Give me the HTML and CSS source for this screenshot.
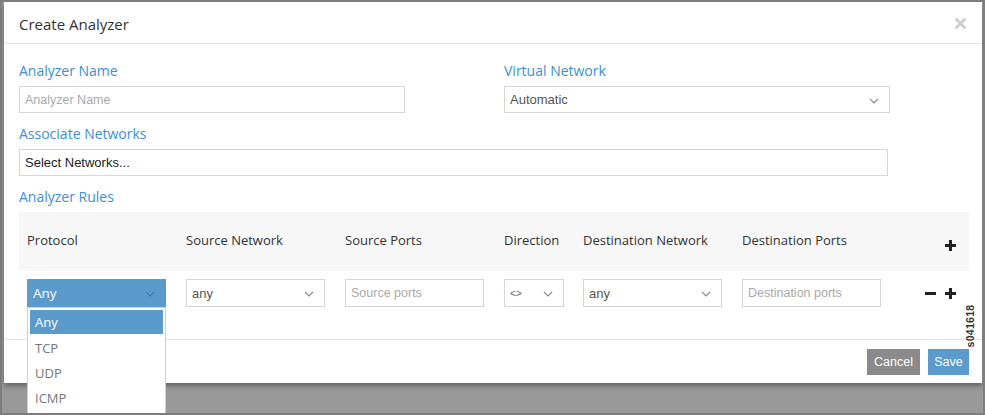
FILE: index.html
```html
<!DOCTYPE html>
<html>
<head>
<meta charset="utf-8">
<link rel="stylesheet" href="styles.css">
</head>
<body>
<div class="screen">
  <div class="modal">
    <div class="modal-header">
      <h1 class="title">Create Analyzer</h1>
      <svg class="close" width="11" height="11" viewBox="0 0 11 11"><path d="M1.5 1.5 L9.5 9.5 M9.5 1.5 L1.5 9.5" stroke="#cfcfcf" stroke-width="3" stroke-linecap="round"/></svg>
    </div>
    <div class="modal-body">
      <div class="two-col">
        <div class="group">
          <label class="lbl">Analyzer Name</label>
          <div class="field w386"><span class="ph">Analyzer Name</span></div>
        </div>
        <div class="group">
          <label class="lbl">Virtual Network</label>
          <div class="field w386 select"><span class="val">Automatic</span><svg class="chev" width="10" height="6" viewBox="0 0 10 6"><polyline points="1,1 5,5 9,1" fill="none" stroke="#888" stroke-width="1.1"/></svg></div>
        </div>
      </div>
      <div class="group">
        <label class="lbl">Associate Networks</label>
        <div class="field w869"><span class="val dark">Select Networks...</span></div>
      </div>
      <div class="group">
        <label class="lbl">Analyzer Rules</label>
        <div class="rules">
          <div class="rules-head">
            <div class="th">Protocol</div>
            <div class="th">Source Network</div>
            <div class="th">Source Ports</div>
            <div class="th">Direction</div>
            <div class="th">Destination Network</div>
            <div class="th">Destination Ports</div>
            <div class="th actions"><span class="plus"></span></div>
          </div>
          <div class="rules-row">
            <div class="td"><div class="field cell select active"><span class="val white">Any</span><svg class="chev" width="10" height="6" viewBox="0 0 10 6"><polyline points="1,1 5,5 9,1" fill="none" stroke="#3f78a8" stroke-width="1.1"/></svg></div></div>
            <div class="td"><div class="field cell select"><span class="val">any</span><svg class="chev" width="10" height="6" viewBox="0 0 10 6"><polyline points="1,1 5,5 9,1" fill="none" stroke="#888" stroke-width="1.1"/></svg></div></div>
            <div class="td"><div class="field cell"><span class="ph sm">Source ports</span></div></div>
            <div class="td"><div class="field dir select"><span class="val tiny">&lt;&gt;</span><svg class="chev" width="10" height="6" viewBox="0 0 10 6"><polyline points="1,1 5,5 9,1" fill="none" stroke="#888" stroke-width="1.1"/></svg></div></div>
            <div class="td"><div class="field cell select"><span class="val">any</span><svg class="chev" width="10" height="6" viewBox="0 0 10 6"><polyline points="1,1 5,5 9,1" fill="none" stroke="#888" stroke-width="1.1"/></svg></div></div>
            <div class="td"><div class="field cell"><span class="ph sm">Destination ports</span></div></div>
            <div class="td actions"><span class="minus"></span><span class="plus"></span></div>
          </div>
        </div>
      </div>
    </div>
    <div class="modal-footer">
      <button class="btn cancel">Cancel</button>
      <button class="btn save">Save</button>
    </div>
  </div>
  <ul class="dropdown">
    <li class="opt sel">Any</li>
    <li class="opt">TCP</li>
    <li class="opt">UDP</li>
    <li class="opt">ICMP</li>
  </ul>
  <div class="figid">s041618</div>
</div>
</body>
</html>
```

FILE: styles.css
```css
html, body {
  margin: 0;
  padding: 0;
}
body {
  width: 985px;
  height: 415px;
  overflow: hidden;
  font-family: "Open Sans", "Liberation Sans", sans-serif;
}
.screen {
  position: relative;
  width: 985px;
  height: 415px;
  box-sizing: border-box;
  border: 2px solid #7d7d7d;
  background: #999999;
  overflow: hidden;
}
.modal {
  margin-left: 2px;
  width: 978px;
  height: 381px;
  background: #fff;
  box-shadow: 0 3px 5px rgba(0,0,0,0.35);
  display: flex;
  flex-direction: column;
}
.modal-header {
  height: 41px;
  border-bottom: 1px solid #e5e5e5;
  display: flex;
  align-items: center;
  justify-content: space-between;
  padding: 0 16px 0 15px;
}
.title {
  margin: 0;
  font-size: 15px;
  font-weight: 400;
  color: #333;
  padding-top: 2px;
}
.close {
  margin-top: 1px;
}
.modal-body {
  padding: 17px 13px 0 15px;
  flex: 1;
  border-bottom: 1px solid #e5e5e5;
}
.two-col {
  display: grid;
  grid-template-columns: 485px 1fr;
}
.group {
  margin-bottom: 11px;
}
.lbl {
  display: block;
  font-size: 14px;
  line-height: 20px;
  color: #3d8fd3;
  margin-bottom: 5px;
}
.field {
  box-sizing: border-box;
  height: 27px;
  border: 1px solid #d6d6d6;
  background: #fff;
  display: flex;
  align-items: center;
  padding: 0 5px;
  font-family: "Liberation Sans", Arial, sans-serif;
  font-size: 13px;
}
.w386 { width: 386px; }
.w869 { width: 869px; }
.ph {
  color: #aaa;
  font-size: 12.5px;
}
.ph.sm { font-size: 12.5px; }
.val {
  color: #555;
  flex: 1;
}
.val.dark { color: #222; }
.val.white { color: #fff; }
.val.tiny { font-size: 10px; color: #666; }
.select {
  padding-right: 10px;
}
.chev {
  flex: none;
  margin-top: 2px;
}
.rules {
  margin-top: 0;
  width: 950px;
}
.rules-head, .rules-row {
  display: grid;
  grid-template-columns: 159px 159px 159px 79px 159px 1fr 60px;
  padding-left: 8px;
}
.rules-head {
  background: #f7f7f7;
  height: 59px;
  align-items: center;
}
.th {
  font-size: 13px;
  color: #333;
  margin-top: -3px;
}
.rules-row {
  padding-top: 8px;
  height: 28px;
  align-items: center;
}
.cell {
  width: 139px;
  height: 28px;
}
.dir {
  width: 60px;
  height: 28px;
}
.active {
  background: #5b9bcc;
  border-color: #5b9bcc;
  font-family: "Open Sans", sans-serif;
  font-size: 13.5px;
}
.actions {
  display: flex;
  justify-content: flex-end;
  gap: 9px;
  padding-right: 13px;
}
.rules-head .actions { margin-top: 0; padding-top: 7px; }
.plus, .minus {
  position: relative;
  width: 11px;
  height: 11px;
  display: inline-block;
}
.plus::before, .minus::before {
  content: "";
  position: absolute;
  left: 0;
  top: 4px;
  width: 11px;
  height: 3px;
  background: #222;
}
.plus::after {
  content: "";
  position: absolute;
  left: 4px;
  top: 0;
  width: 3px;
  height: 11px;
  background: #222;
}
.modal-footer {
  height: 42px;
  display: flex;
  align-items: center;
  justify-content: flex-end;
  gap: 8px;
  padding-right: 13px;
  padding-top: 1px;
}
.btn {
  border: none;
  height: 26px;
  color: #fff;
  font-family: "Liberation Sans", Arial, sans-serif;
  font-size: 12.5px;
  padding: 0;
}
.cancel { background: #8a8a8a; width: 53px; }
.save { background: #5b9bcc; width: 41px; }
.dropdown {
  position: absolute;
  left: 25px;
  top: 305px;
  width: 133px;
  height: 110px;
  margin: 0;
  padding: 2px;
  list-style: none;
  background: #fff;
  border: 1px solid #cfcfcf;
}
.opt {
  height: 25px;
  line-height: 25px;
  padding-left: 5px;
  font-size: 13px;
  color: #777;
}
.opt.sel {
  background: #5b9bcc;
  color: #fff;
  height: 24px;
  line-height: 24px;
  margin-bottom: 2px;
}
.figid {
  position: absolute;
  left: 946px;
  top: 318px;
  transform: rotate(-90deg);
  transform-origin: center;
  width: 44px;
  text-align: center;
  font-family: "Liberation Sans", Arial, sans-serif;
  font-weight: bold;
  font-size: 10.5px;
  color: #333;
  letter-spacing: 0.3px;
}
```
